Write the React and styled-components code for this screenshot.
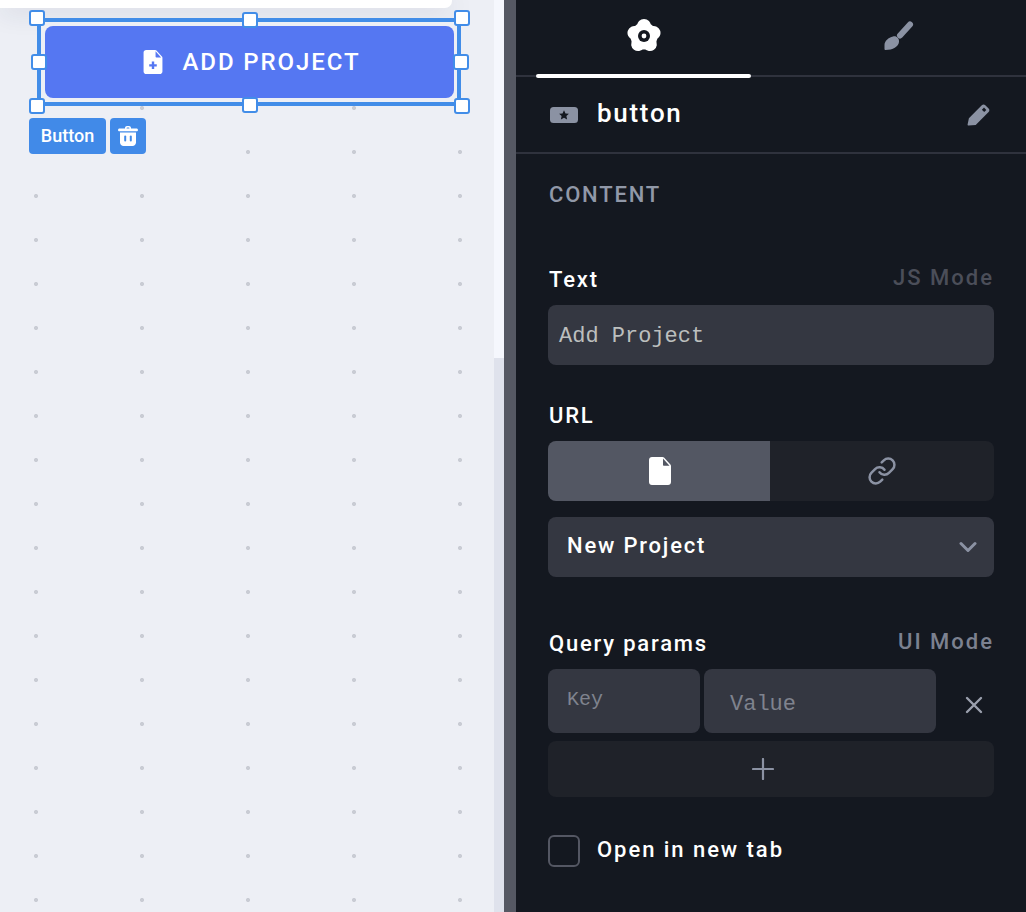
import React from "react";
import styled, { createGlobalStyle } from "styled-components";
import { Link } from "lucide-react";

const GlobalStyle = createGlobalStyle`
  html, body {
    margin: 0;
    height: 100%;
    overflow: hidden;
    font-family: Roboto, "Liberation Sans", sans-serif;
  }
  * {
    box-sizing: border-box;
  }
`;

const handles = [
  { x: -12, y: -12 },
  { x: 413, y: -12 },
  { x: -12, y: 76 },
  { x: 413, y: 76 },
  { x: 201, y: -10 },
  { x: 201, y: 75 },
  { x: -10, y: 32 },
  { x: 412, y: 32 },
];

function FlowerIcon() {
  const lobes = [0, 72, 144, 216, 288];
  return (
    <svg width="36" height="36" viewBox="0 0 36 36">
      <circle cx="18" cy="18" r="13.5" fill="#fff" />
      {lobes.map((deg) => (
        <circle
          key={deg}
          cx="18"
          cy="8"
          r="7"
          fill="#fff"
          transform={`rotate(${deg} 18 18)`}
        />
      ))}
      <circle cx="18" cy="18" r="6" fill="#141820" />
      <circle cx="18" cy="18" r="2.4" fill="#fff" />
    </svg>
  );
}

function BrushIcon() {
  return (
    <svg width="30" height="30" viewBox="0 0 30 30">
      <path
        d="M26 3.500L16 14.500"
        fill="none"
        stroke="#8b92a3"
        strokeWidth="6"
        strokeLinecap="round"
      />
      <path
        d="M9 15.500c3.500-1 6.500 2 6 5.500-.6 4.500-6 8-13.500 8-.6 0-1-.5-1-1v-4c0-4 4-7.500 8.500-8.500z"
        fill="#8b92a3"
      />
    </svg>
  );
}

function WidgetIcon() {
  return (
    <svg width="28" height="16" viewBox="0 0 28 16">
      <rect width="28" height="16" rx="3.5" fill="#8b92a3" />
      <path
        d="M14 3.200l1.500 3.200 3.400.4-2.500 2.300.7 3.400-3.100-1.700-3.100 1.700.7-3.400-2.500-2.300 3.400-.4z"
        fill="#141820"
      />
    </svg>
  );
}

function PencilIcon() {
  return (
    <svg width="24" height="24" viewBox="0 0 24 24">
      <path
        d="M1.500 22.600c-.6 0-1-.4-.9-1l1.300-6.400L14.800 2.300c1-1 2.500-1 3.500 0l3.300 3.300c1 1 1 2.500 0 3.500L8.700 22z"
        fill="#8b92a3"
      />
      <path d="M17 4.600l2.300 2.300-2.100 2.100-2.300-2.300z" fill="#141820" />
    </svg>
  );
}

function FileIcon({ width, height, fold, plus }) {
  return (
    <svg width={width} height={height} viewBox="0 0 22 28">
      <path
        d="M3 0h10.500c.6 0 1.100.2 1.500.6l6.400 7c.4.4.6.9.6 1.400V25c0 1.700-1.300 3-3 3H3c-1.700 0-3-1.300-3-3V3c0-1.700 1.300-3 3-3z"
        fill="#fff"
      />
      <path d="M14 1.500l6.500 7.300H15c-.6 0-1-.4-1-1z" fill={fold} />
      {plus && (
        <path
          d="M9.600 13.500h2.800v3h3v2.800h-3v3H9.600v-3h-3v-2.800h3z"
          fill={plus}
        />
      )}
    </svg>
  );
}

function TrashIcon() {
  return (
    <svg width="20" height="20" viewBox="0 0 20 20">
      <path
        d="M7 2.500V2c0-1.100.9-2 2-2h2c1.100 0 2 .9 2 2v.5h5.500c.8 0 1.500.7 1.500 1.500s-.7 1.300-1.500 1.300h-17C.7 5.300 0 4.800 0 4s.7-1.500 1.500-1.500zm1.600 0h2.800V2c0-.3-.2-.5-.5-.5H9.100c-.3 0-.5.200-.5.500z"
        fill="#fff"
        fillRule="evenodd"
      />
      <path
        d="M2 6.500h16v10c0 1.900-1.600 3.500-3.500 3.500h-9C3.600 20 2 18.400 2 16.500z"
        fill="#fff"
      />
      <rect x="6.200" y="9.500" width="2" height="6" rx="1" fill="#418ae8" />
      <rect x="11.800" y="9.500" width="2" height="6" rx="1" fill="#418ae8" />
    </svg>
  );
}

function Chevron() {
  return (
    <svg width="18" height="12" viewBox="0 0 18 12" fill="none">
      <path
        d="M2 2.500l7 7 7-7"
        stroke="#8b92a3"
        strokeWidth="3"
        strokeLinecap="round"
        strokeLinejoin="round"
      />
    </svg>
  );
}

function CloseIcon() {
  return (
    <svg width="18" height="18" viewBox="0 0 18 18" fill="none">
      <path
        d="M2 2l14 14M16 2L2 16"
        stroke="#9ba0ad"
        strokeWidth="2.400"
        strokeLinecap="round"
      />
    </svg>
  );
}

function PlusIcon() {
  return (
    <svg width="22" height="22" viewBox="0 0 22 22" fill="none">
      <path
        d="M11 1v20M1 11h20"
        stroke="#8b92a3"
        strokeWidth="2.200"
        strokeLinecap="round"
      />
    </svg>
  );
}

export default function App() {
  return (
    <>
      <GlobalStyle />
      <Page>
        <Canvas>
          <TopCard />
          <SelectionFrame>
            {handles.map((h) => (
              <Handle key={`${h.x}-${h.y}`} $x={h.x} $y={h.y} />
            ))}
            <ProjectButton>
              <FileIcon width={20} height={24} fold="#5577f2" plus="#5577f2" />
              ADD PROJECT
            </ProjectButton>
          </SelectionFrame>
          <ChipRow>
            <Chip>Button</Chip>
            <Chip $square>
              <TrashIcon />
            </Chip>
          </ChipRow>
        </Canvas>
        <Scrollbar>
          <ScrollThumb />
        </Scrollbar>
        <Divider />
        <Panel>
          <Tabs>
            <Tab $active>
              <FlowerIcon />
            </Tab>
            <Tab>
              <BrushIcon />
            </Tab>
          </Tabs>
          <TitleRow>
            <WidgetIcon />
            <WidgetName>button</WidgetName>
            <PencilIcon />
          </TitleRow>
          <Body>
            <SectionHeading>CONTENT</SectionHeading>

            <LabelRow $top={56}>
              <Label>Text</Label>
              <ModeLink $dim>JS Mode</ModeLink>
            </LabelRow>
            <TextInput>Add Project</TextInput>

            <LabelRow $top={36}>
              <Label>URL</Label>
            </LabelRow>
            <Segmented>
              <Segment $active>
                <FileIcon width={22} height={28} fold="#535763" />
              </Segment>
              <Segment>
                <Link size={30} color="#8b92a3" strokeWidth={2} />
              </Segment>
            </Segmented>
            <SelectBox>
              <span>New Project</span>
              <Chevron />
            </SelectBox>

            <LabelRow $top={52}>
              <Label>Query params</Label>
              <ModeLink>UI Mode</ModeLink>
            </LabelRow>
            <ParamRow>
              <ParamField $inset={19} $bottom={3} $size={20}>
                Key
              </ParamField>
              <ParamField $inset={26} $top={6} $size={22}>
                Value
              </ParamField>
              <RemoveCell>
                <CloseIcon />
              </RemoveCell>
            </ParamRow>
            <AddRow>
              <PlusIcon />
            </AddRow>

            <CheckRow>
              <CheckBox />
              <CheckLabel>Open in new tab</CheckLabel>
            </CheckRow>
          </Body>
        </Panel>
      </Page>
    </>
  );
}

const Page = styled.div`
  display: flex;
  width: 1026px;
  height: 912px;
  overflow: hidden;
`;

const Canvas = styled.div`
  flex: 0 0 494px;
  height: 100%;
  background-color: #edeff5;
  background-image: radial-gradient(circle at center, #c9ccd4 1.9px, transparent 2.25px);
  background-size: 106px 44px;
  background-position: -17px 86px;
`;

const TopCard = styled.div`
  width: 452px;
  height: 8px;
  margin-bottom: 10px;
  background: #fff;
  border-bottom-right-radius: 7px;
  box-shadow: 0 2px 26px rgba(30, 38, 70, 0.2);
`;

const SelectionFrame = styled.div`
  position: relative;
  width: 424px;
  height: 88px;
  margin-left: 37px;
  padding: 4px 3px 4px 4px;
  border: 4px solid #428de8;
  background: #edeff5;
`;

const Handle = styled.span`
  position: absolute;
  left: ${(p) => p.$x}px;
  top: ${(p) => p.$y}px;
  width: 16px;
  height: 16px;
  background: #fff;
  border: 2px solid #428de8;
  border-radius: 3px;
`;

const ProjectButton = styled.div`
  display: flex;
  align-items: center;
  justify-content: center;
  gap: 20px;
  height: 100%;
  padding-left: 4px;
  background: #5577f2;
  border-radius: 8px;
  color: #fff;
  font-size: 24px;
  font-weight: 500;
  letter-spacing: 1.9px;
`;

const ChipRow = styled.div`
  display: flex;
  gap: 4px;
  margin: 12px 0 0 29px;
`;

const Chip = styled.div`
  display: flex;
  align-items: center;
  justify-content: center;
  width: ${(p) => (p.$square ? "36px" : "77px")};
  height: 36px;
  padding-bottom: ${(p) => (p.$square ? "0" : "2px")};
  background: #418ae8;
  border-radius: 4px;
  color: #fff;
  font-size: 18px;
  font-weight: 500;
`;

const Scrollbar = styled.div`
  flex: 0 0 10px;
  background: #dfe2ec;
`;

const ScrollThumb = styled.div`
  height: 358px;
  background: #f5f7fd;
`;

const Divider = styled.div`
  flex: 0 0 12px;
  background: #555863;
`;

const Panel = styled.div`
  flex: 1;
  background: #141820;
  color: #fff;
`;

const Tabs = styled.div`
  display: grid;
  grid-template-columns: 215px 1fr;
  column-gap: 21px;
  height: 77px;
  padding-left: 20px;
  border-bottom: 2px solid #2f323d;
`;

const Tab = styled.div`
  position: relative;
  display: flex;
  align-items: center;
  justify-content: center;
  padding-bottom: 3px;

  &::after {
    content: "";
    display: ${(p) => (p.$active ? "block" : "none")};
    position: absolute;
    left: 0;
    right: 0;
    bottom: -3px;
    height: 4px;
    background: #fff;
    border-radius: 2px;
  }
`;

const TitleRow = styled.div`
  display: flex;
  align-items: center;
  height: 77px;
  padding: 0 35px 0 34px;
  border-bottom: 2px solid #2f323d;
`;

const WidgetName = styled.div`
  flex: 1;
  margin: 0 0 4px 19px;
  font-size: 26px;
  font-weight: 500;
  letter-spacing: 1.7px;
`;

const Body = styled.div`
  padding: 27px 32px 0;
`;

const SectionHeading = styled.div`
  height: 28px;
  line-height: 28px;
  padding-left: 1px;
  color: #9198a8;
  font-size: 22px;
  font-weight: 500;
  letter-spacing: 1.8px;
`;

const LabelRow = styled.div`
  display: flex;
  align-items: center;
  justify-content: space-between;
  height: 28px;
  margin-top: ${(p) => p.$top}px;
  padding-left: 1px;
`;

const Label = styled.div`
  font-size: 22px;
  font-weight: 500;
  letter-spacing: 1.8px;
`;

const ModeLink = styled.div`
  margin-top: -3px;
  color: ${(p) => (p.$dim ? "#4b4e59" : "#7c8190")};
  font-size: 22px;
  font-weight: 500;
  letter-spacing: 2px;
`;

const TextInput = styled.div`
  display: flex;
  align-items: center;
  height: 60px;
  margin-top: 12px;
  padding: 2px 0 0 11px;
  background: #343741;
  border-radius: 8px;
  color: #bcbfbe;
  font-family: "Liberation Mono", monospace;
  font-size: 22px;
`;

const Segmented = styled.div`
  display: grid;
  grid-template-columns: 222px 1fr;
  height: 60px;
  margin-top: 12px;
  background: #1f2229;
  border-radius: 8px;
  overflow: hidden;
`;

const Segment = styled.div`
  display: flex;
  align-items: center;
  justify-content: center;
  padding-left: ${(p) => (p.$active ? "2px" : "0")};
  background: ${(p) => (p.$active ? "#535763" : "transparent")};
`;

const SelectBox = styled.div`
  display: flex;
  align-items: center;
  justify-content: space-between;
  height: 60px;
  margin-top: 16px;
  padding: 0 17px 0 19px;
  background: #343741;
  border-radius: 8px;
  font-size: 22px;
  font-weight: 500;
  letter-spacing: 1.8px;

  span {
    margin-bottom: 4px;
  }
`;

const ParamRow = styled.div`
  display: grid;
  grid-template-columns: 152px 232px 1fr;
  column-gap: 4px;
  height: 64px;
  margin-top: 12px;
`;

const ParamField = styled.div`
  display: flex;
  align-items: center;
  padding-left: ${(p) => p.$inset}px;
  padding-top: ${(p) => p.$top || 0}px;
  padding-bottom: ${(p) => p.$bottom || 0}px;
  background: #343741;
  border-radius: 8px;
  color: #7f838e;
  font-family: "Liberation Mono", monospace;
  font-size: ${(p) => p.$size}px;
`;

const RemoveCell = styled.div`
  display: flex;
  align-items: center;
  justify-content: flex-end;
  padding: 8px 11px 0 0;
`;

const AddRow = styled.div`
  display: flex;
  align-items: center;
  justify-content: center;
  height: 56px;
  margin-top: 8px;
  padding-right: 16px;
  background: #1f2229;
  border-radius: 8px;
`;

const CheckRow = styled.div`
  display: flex;
  align-items: center;
  gap: 17px;
  margin-top: 38px;
`;

const CheckBox = styled.div`
  width: 32px;
  height: 32px;
  border: 2px solid #545763;
  border-radius: 6px;
`;

const CheckLabel = styled.div`
  margin-bottom: 4px;
  font-size: 22px;
  font-weight: 500;
  letter-spacing: 1.95px;
`;
